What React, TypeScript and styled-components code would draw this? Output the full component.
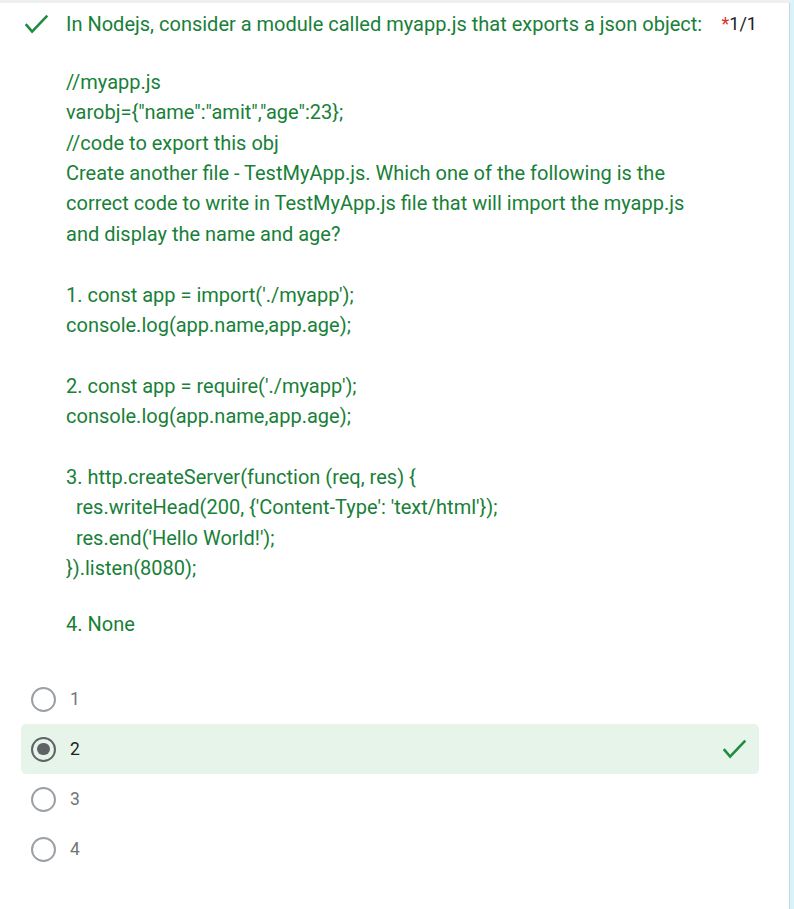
import React from "react";
import styled, { createGlobalStyle } from "styled-components";

const Global = createGlobalStyle`
  html, body { margin: 0; padding: 0; }
  body { background: #d9f3fa; font-family: Roboto, "Noto Sans", Arial, sans-serif; }
`;

const Page = styled.div`
  width: 794px;
  min-height: 909px;
  display: flex;
  flex-direction: column;
`;

const TopStrip = styled.div`
  height: 3px;
  width: 791px;
  background: #eeeff0;
`;

const Card = styled.div`
  width: 790px;
  min-height: 906px;
  background: #ffffff;
  border-right: 1px solid #c9d7dc;
  box-sizing: border-box;
  padding-top: 6px;
`;

const Header = styled.div`
  display: flex;
  align-items: flex-start;
  padding: 0 32px 0 23px;
`;

const IconBox = styled.div`
  width: 26px;
  height: 26px;
  margin-top: 2px;
  margin-right: 17px;
  flex: none;
`;

const Body = styled.div`
  flex: 1;
  color: #188038;
  font-size: 20px;
  line-height: 30.4px;
  white-space: pre;
`;

const Line = styled.div``;

const Gap = styled.div<{ $h: number }>`
  height: ${(p) => p.$h}px;
`;

const Score = styled.div`
  flex: none;
  font-size: 18px;
  line-height: 30.4px;
  color: #202124;
  margin-left: 12px;
`;

const Star = styled.span`
  color: #d93025;
`;

const Options = styled.div`
  display: flex;
  flex-direction: column;
  padding: 34.8px 30px 40px 21px;
`;

const Option = styled.div<{ $correct?: boolean }>`
  height: 50px;
  display: flex;
  align-items: center;
  padding: 0 12px 0 10px;
  border-radius: 5px;
  background: ${(p) => (p.$correct ? "#e6f4ea" : "transparent")};
`;

const Radio = styled.div<{ $checked?: boolean }>`
  width: 25px;
  height: 25px;
  box-sizing: border-box;
  border-radius: 50%;
  border: 2px solid ${(p) => (p.$checked ? "#5f6368" : "#9aa0a6")};
  display: flex;
  align-items: center;
  justify-content: center;
  margin-right: 14px;
  flex: none;
  &::after {
    content: "";
    display: ${(p) => (p.$checked ? "block" : "none")};
    width: 12.5px;
    height: 12.5px;
    border-radius: 50%;
    background: #5f6368;
  }
`;

const Label = styled.span<{ $checked?: boolean }>`
  flex: 1;
  font-size: 17.5px;
  color: ${(p) => (p.$checked ? "#202124" : "#70757a")};
`;

const Check = () => (
  <svg width={26} height={26} viewBox="0 0 26 26">
    <path
      d="M3.6 14.2L9.1 20.6L23.4 5.6"
      fill="none"
      stroke="#1e8e3e"
      strokeWidth={2.6}
      strokeLinecap="square"
    />
  </svg>
);

const bodyLines = [
  "//myapp.js",
  'varobj={"name":"amit","age":23};',
  "//code to export this obj",
  "Create another file - TestMyApp.js. Which one of the following is the",
  "correct code to write in TestMyApp.js file that will import the myapp.js",
  "and display the name and age?",
  "",
  "1. const app = import('./myapp');",
  "console.log(app.name,app.age);",
  "",
  "2. const app = require('./myapp');",
  "console.log(app.name,app.age);",
  "",
  "3. http.createServer(function (req, res) {",
  "  res.writeHead(200, {'Content-Type': 'text/html'});",
  "  res.end('Hello World!');",
  "}).listen(8080);",
];

const options = ["1", "2", "3", "4"];

export default function App() {
  return (
    <Page>
      <Global />
      <TopStrip />
      <Card>
        <Header>
          <IconBox>
            <Check />
          </IconBox>
          <Body>
            <Line>In Nodejs, consider a module called myapp.js that exports a json object:</Line>
            <Gap $h={27.4} />
            {bodyLines.map((l, i) => (
              <Line key={i}>{l === "" ? "\u00a0" : l}</Line>
            ))}
            <Gap $h={25.2} />
            <Line>4. None</Line>
          </Body>
          <Score>
            <Star>*</Star>1/1
          </Score>
        </Header>
        <Options>
          {options.map((o) => {
            const sel = o === "2";
            return (
              <Option key={o} $correct={sel}>
                <Radio $checked={sel} />
                <Label $checked={sel}>{o}</Label>
                {sel && <Check />}
              </Option>
            );
          })}
        </Options>
      </Card>
    </Page>
  );
}
